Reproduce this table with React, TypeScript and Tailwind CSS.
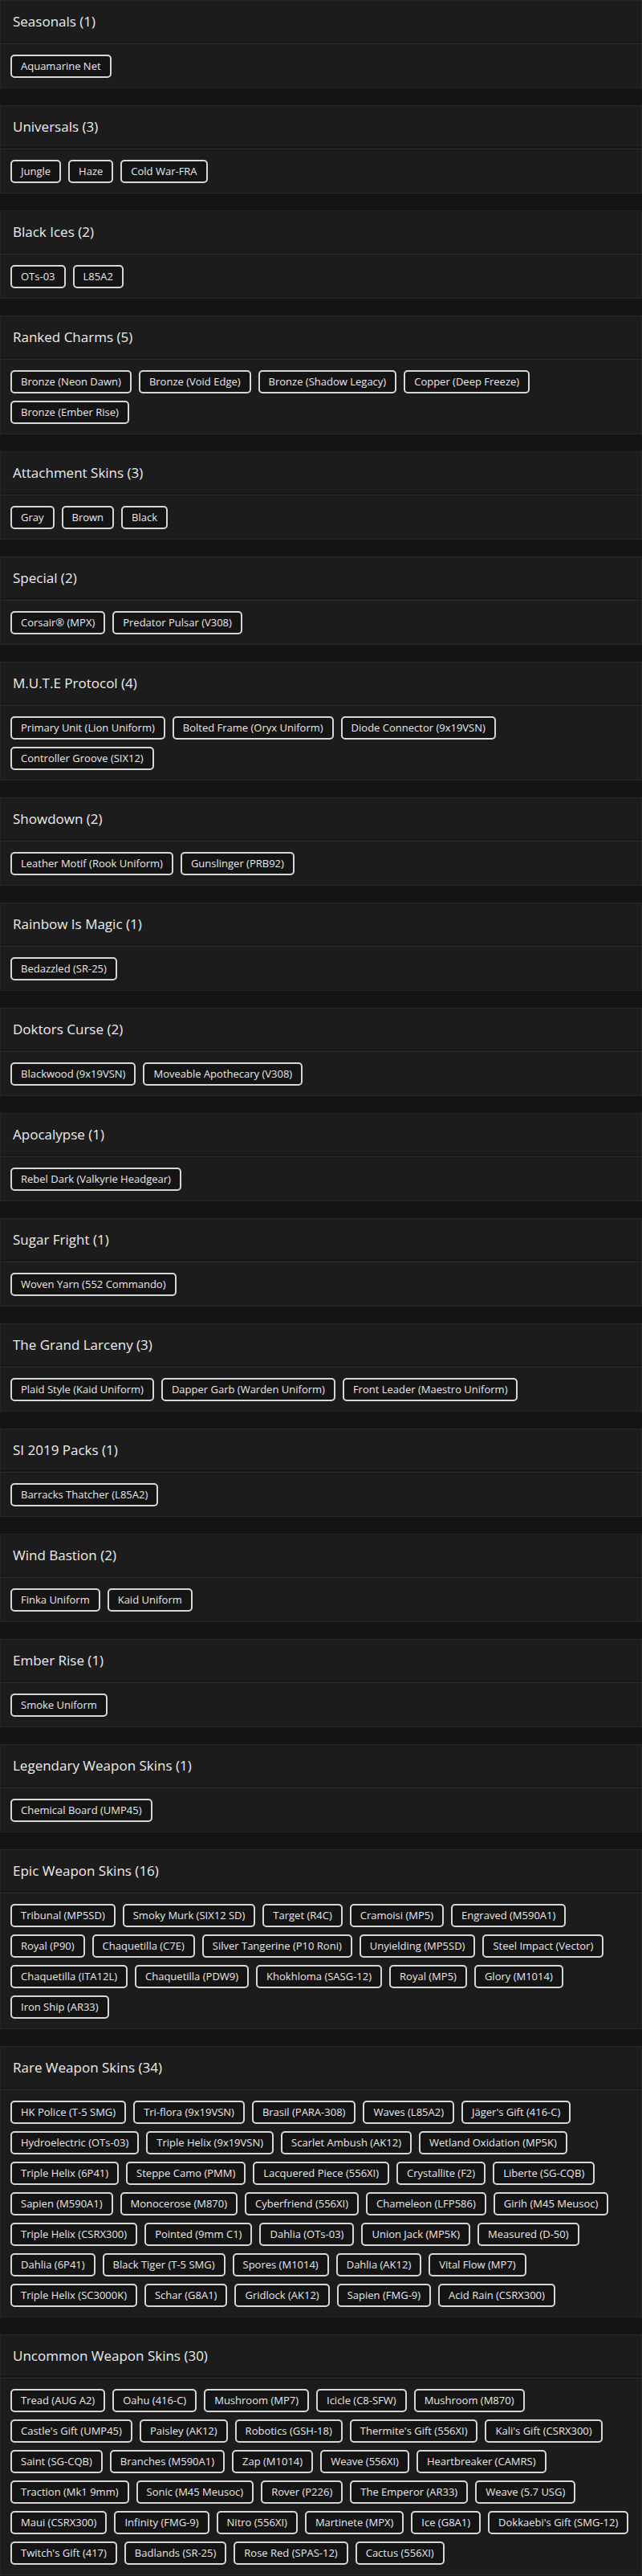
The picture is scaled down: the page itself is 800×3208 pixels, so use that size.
import React from "react";

type Section = { title: string; items: string[] };

const sections: Section[] = [
  { title: "Seasonals", items: ["Aquamarine Net"] },
  { title: "Universals", items: ["Jungle", "Haze", "Cold War-FRA"] },
  { title: "Black Ices", items: ["OTs-03", "L85A2"] },
  {
    title: "Ranked Charms",
    items: [
      "Bronze (Neon Dawn)",
      "Bronze (Void Edge)",
      "Bronze (Shadow Legacy)",
      "Copper (Deep Freeze)",
      "Bronze (Ember Rise)",
    ],
  },
  { title: "Attachment Skins", items: ["Gray", "Brown", "Black"] },
  { title: "Special", items: ["Corsair® (MPX)", "Predator Pulsar (V308)"] },
  {
    title: "M.U.T.E Protocol",
    items: [
      "Primary Unit (Lion Uniform)",
      "Bolted Frame (Oryx Uniform)",
      "Diode Connector (9x19VSN)",
      "Controller Groove (SIX12)",
    ],
  },
  { title: "Showdown", items: ["Leather Motif (Rook Uniform)", "Gunslinger (PRB92)"] },
  { title: "Rainbow Is Magic", items: ["Bedazzled (SR-25)"] },
  { title: "Doktors Curse", items: ["Blackwood (9x19VSN)", "Moveable Apothecary (V308)"] },
  { title: "Apocalypse", items: ["Rebel Dark (Valkyrie Headgear)"] },
  { title: "Sugar Fright", items: ["Woven Yarn (552 Commando)"] },
  {
    title: "The Grand Larceny",
    items: [
      "Plaid Style (Kaid Uniform)",
      "Dapper Garb (Warden Uniform)",
      "Front Leader (Maestro Uniform)",
    ],
  },
  { title: "SI 2019 Packs", items: ["Barracks Thatcher (L85A2)"] },
  { title: "Wind Bastion", items: ["Finka Uniform", "Kaid Uniform"] },
  { title: "Ember Rise", items: ["Smoke Uniform"] },
  { title: "Legendary Weapon Skins", items: ["Chemical Board (UMP45)"] },
  {
    title: "Epic Weapon Skins",
    items: [
      "Tribunal (MP5SD)",
      "Smoky Murk (SIX12 SD)",
      "Target (R4C)",
      "Cramoisi (MP5)",
      "Engraved (M590A1)",
      "Royal (P90)",
      "Chaquetilla (C7E)",
      "Silver Tangerine (P10 Roni)",
      "Unyielding (MP5SD)",
      "Steel Impact (Vector)",
      "Chaquetilla (ITA12L)",
      "Chaquetilla (PDW9)",
      "Khokhloma (SASG-12)",
      "Royal (MP5)",
      "Glory (M1014)",
      "Iron Ship (AR33)",
    ],
  },
  {
    title: "Rare Weapon Skins",
    items: [
      "HK Police (T-5 SMG)",
      "Tri-flora (9x19VSN)",
      "Brasil (PARA-308)",
      "Waves (L85A2)",
      "Jäger's Gift (416-C)",
      "Hydroelectric (OTs-03)",
      "Triple Helix (9x19VSN)",
      "Scarlet Ambush (AK12)",
      "Wetland Oxidation (MP5K)",
      "Triple Helix (6P41)",
      "Steppe Camo (PMM)",
      "Lacquered Piece (556XI)",
      "Crystallite (F2)",
      "Liberte (SG-CQB)",
      "Sapien (M590A1)",
      "Monocerose (M870)",
      "Cyberfriend (556XI)",
      "Chameleon (LFP586)",
      "Girih (M45 Meusoc)",
      "Triple Helix (CSRX300)",
      "Pointed (9mm C1)",
      "Dahlia (OTs-03)",
      "Union Jack (MP5K)",
      "Measured (D-50)",
      "Dahlia (6P41)",
      "Black Tiger (T-5 SMG)",
      "Spores (M1014)",
      "Dahlia (AK12)",
      "Vital Flow (MP7)",
      "Triple Helix (SC3000K)",
      "Schar (G8A1)",
      "Gridlock (AK12)",
      "Sapien (FMG-9)",
      "Acid Rain (CSRX300)",
    ],
  },
  {
    title: "Uncommon Weapon Skins",
    items: [
      "Tread (AUG A2)",
      "Oahu (416-C)",
      "Mushroom (MP7)",
      "Icicle (C8-SFW)",
      "Mushroom (M870)",
      "Castle's Gift (UMP45)",
      "Paisley (AK12)",
      "Robotics (GSH-18)",
      "Thermite's Gift (556XI)",
      "Kali's Gift (CSRX300)",
      "Saint (SG-CQB)",
      "Branches (M590A1)",
      "Zap (M1014)",
      "Weave (556XI)",
      "Heartbreaker (CAMRS)",
      "Traction (Mk1 9mm)",
      "Sonic (M45 Meusoc)",
      "Rover (P226)",
      "The Emperor (AR33)",
      "Weave (5.7 USG)",
      "Maui (CSRX300)",
      "Infinity (FMG-9)",
      "Nitro (556XI)",
      "Martinete (MPX)",
      "Ice (G8A1)",
      "Dokkaebi's Gift (SMG-12)",
      "Twitch's Gift (417)",
      "Badlands (SR-25)",
      "Rose Red (SPAS-12)",
      "Cactus (556XI)",
    ],
  },
];

function Card({ section }: { section: Section }) {
  return (
    <div className="border border-[#262626] bg-[#1c1c1c]">
      <div className="flex h-[52px] items-center border-b border-[#121212] px-[15px]">
        <h2 className="text-[17px] font-medium leading-none text-[#ececec]">
          {section.title} ({section.items.length})
        </h2>
      </div>
      <div className="mt-[1px] flex flex-wrap gap-[9px] border-t border-[#2a2a2a] pl-[12px] pr-[8px] pb-[12px] pt-[13px]">
        {section.items.map((item, i) => (
          <button
            key={i}
            className="flex h-[29px] items-center rounded-[5px] border-2 border-[#d6d6d6] bg-[#141414] px-[11px] text-[13px] leading-none whitespace-nowrap text-[#e8e8e8]"
          >
            {item}
          </button>
        ))}
      </div>
    </div>
  );
}

export default function App() {
  return (
    <div
      className="min-h-screen bg-[#141414]"
      style={{ fontFamily: "'Open Sans', 'Noto Sans', sans-serif" }}
    >
      <div className="flex flex-col gap-[21px]">
        {sections.map((s, i) => (
          <Card key={i} section={s} />
        ))}
      </div>
    </div>
  );
}
